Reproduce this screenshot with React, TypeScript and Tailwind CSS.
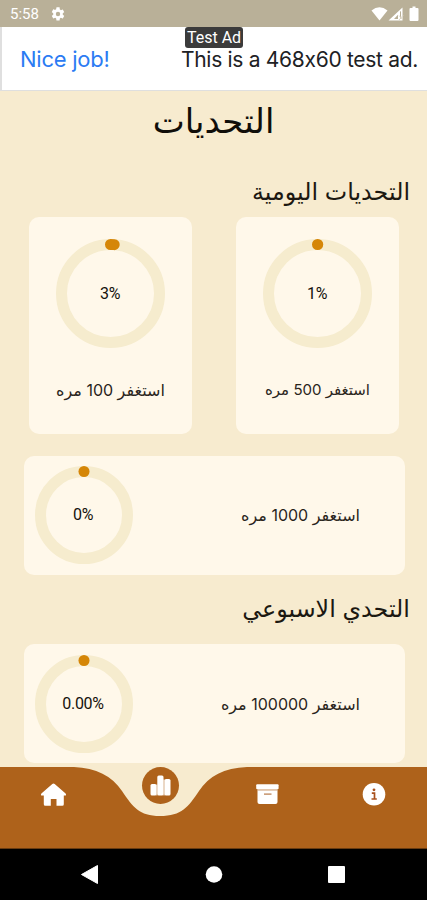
import type { ReactNode } from "react";

interface Challenge {
  label: string;
  percent: string;
  sweep: number;
}

const DAILY: Challenge[] = [
  { label: "استغفر 100 مره", percent: "3%", sweep: 3 },
  { label: "استغفر 500 مره", percent: "1%", sweep: 0.2 },
];

const DAILY_LONG: Challenge = { label: "استغفر 1000 مره", percent: "0%", sweep: 0 };
const WEEKLY: Challenge = { label: "استغفر 100000 مره", percent: "0.00%", sweep: 0 };

function Ring({ size, percent, sweep }: { size: number; percent: string; sweep: number }) {
  const r = size / 2 - 5.5;
  const c = size / 2;
  const angle = (sweep / 100) * Math.PI * 2;
  const x = c + r * Math.sin(angle * 0.4);
  const y = c - r * Math.cos(angle * 0.4);

  return (
    <div className="relative flex shrink-0 items-center justify-center">
      <svg width={size} height={size} className="block overflow-visible">
        <circle cx={c} cy={c} r={r} fill="none" stroke="#f6ecce" strokeWidth="11" />
        <path
          d={`M${c} ${c - r}A${r} ${r} 0 0 1 ${x + 0.01} ${y}`}
          fill="none"
          stroke="#d58607"
          strokeWidth="11"
          strokeLinecap="round"
        />
      </svg>
      <span className="absolute pr-px font-['Roboto',sans-serif] text-base leading-none tracking-[-0.3px] text-[#15120d]">
        {percent}
      </span>
    </div>
  );
}

function SquareCard({ item, className }: { item: Challenge; className: string }) {
  return (
    <div className="flex h-[217px] w-[163px] flex-col items-center rounded-[10px] bg-[#fff8ea] pt-[22px]">
      <Ring size={109} percent={item.percent} sweep={item.sweep} />
      <p dir="rtl" className={`mt-8 whitespace-nowrap leading-5 text-[#2a251c] ${className}`}>
        {item.label}
      </p>
    </div>
  );
}

function WideCard({ item, className }: { item: Challenge; className?: string }) {
  return (
    <div
      className={`ml-6 flex h-[119px] w-[381px] items-center justify-between rounded-[10px] bg-[#fff8ea] pr-[45px] pl-[10.5px] ${className ?? ""}`}
    >
      <Ring size={98} percent={item.percent} sweep={item.sweep} />
      <p dir="rtl" className="whitespace-nowrap text-base leading-5 text-[#2a251c]">
        {item.label}
      </p>
    </div>
  );
}

function SectionTitle({ children }: { children: ReactNode }) {
  return (
    <h2 dir="rtl" className="pr-[17px] text-[23.8px] leading-8 whitespace-nowrap text-[#1c1811]">
      {children}
    </h2>
  );
}

function StatusBar() {
  return (
    <header className="flex h-[27px] shrink-0 items-center bg-[#b9b098] pl-[10px] pr-[7px] text-white">
      <span className="pt-px font-['Roboto',sans-serif] text-[15px] leading-none">5:58</span>
      <svg viewBox="0 0 24 24" className="ml-[11px] size-4" fill="currentColor">
        <path d="M19.14 12.94c.04-.3.06-.61.06-.94s-.02-.64-.07-.94l2.03-1.58a.5.5 0 0 0 .12-.61l-1.92-3.32a.49.49 0 0 0-.59-.22l-2.39.96a7 7 0 0 0-1.62-.94l-.36-2.54A.48.48 0 0 0 13.92 2h-3.84a.48.48 0 0 0-.47.41l-.36 2.54a7 7 0 0 0-1.62.94l-2.39-.96a.49.49 0 0 0-.59.22L2.74 8.87a.49.49 0 0 0 .12.61l2.03 1.58a6 6 0 0 0 0 1.88l-2.03 1.58a.5.5 0 0 0-.12.61l1.92 3.32c.12.22.37.29.59.22l2.39-.96c.5.38 1.03.7 1.62.94l.36 2.54c.05.24.24.41.48.41h3.84c.24 0 .44-.17.47-.41l.36-2.54a7 7 0 0 0 1.62-.94l2.39.96c.22.08.47 0 .59-.22l1.92-3.32a.49.49 0 0 0-.12-.61zM12 15.3a3.3 3.3 0 1 1 0-6.6 3.3 3.3 0 0 1 0 6.6z" />
      </svg>
      <svg width="50" height="16" viewBox="0 0 50 16" className="ml-auto" fill="currentColor">
        <path d="M1.5 4.5Q9.5-2 17.5 4.5L9.5 14.5Z" />
        <path fillRule="evenodd" d="M18.5 14.5L32.5 1.5V14.5ZM24 13L28 8.8V13ZM30 5.8V13H31V5Z" />
        <path d="M29 9.5L33 14M33 9.5L29 14" stroke="#ded8c9" strokeWidth="1" />
        <path d="M42.5.5h3v1.5H47.5q1 0 1 1V14q0 1-1 1h-7q-1 0-1-1V3q0-1 1-1h2Z" />
      </svg>
    </header>
  );
}

function AdBanner() {
  return (
    <div className="relative flex h-16 shrink-0 items-center justify-between border-b border-l-2 border-[#dfdfdf] bg-white pt-px pr-[9px] pl-[18px] font-['Inter',sans-serif] text-[21px] leading-none whitespace-nowrap">
      <span className="text-[22px] tracking-[-0.25px] text-[#2b7bf3]">Nice job!</span>
      <span className="tracking-[-0.3px] text-[#202124]">This is a 468x60 test ad.</span>
      <span className="absolute top-0 left-[183px] flex h-[21px] w-[58px] items-center justify-center rounded-[3px] bg-[#3b3b3b] pt-px font-['Roboto',sans-serif] text-base leading-none text-white">
        Test Ad
      </span>
    </div>
  );
}

function TabBar() {
  return (
    <nav className="relative h-[82px] shrink-0">
      <svg width="427" height="82" viewBox="0 0 427 82" className="block">
        <path
          d="M0 0H74C96 1 112 9 122 24C133 40 139 49 160 49C182 49 188 40 199 24C209 9 224 1 247 0H427V82H0Z"
          fill="#ae621b"
        />
        <rect y="81" width="427" height="1" fill="#693b10" />
        <circle cx="160.5" cy="18.5" r="18.5" fill="#ae621b" />
        {/* stats */}
        <g fill="#fff">
          <rect x="150.5" y="17" width="6" height="11.5" rx="1.5" />
          <rect x="157.3" y="8.5" width="6.2" height="20" rx="1.5" />
          <rect x="164.5" y="12" width="6" height="16.5" rx="1.5" />
          <path d="M156 17.5h1.5v11H156zM163 12.5h2v16h-2z" opacity=".5" />
        </g>
        {/* home */}
        <path
          d="M52.3 16.9Q53.5 15.9 54.7 16.9L65.6 26.4Q66.8 28.4 65 28.6H63.8V37.2Q63.8 38.7 62.3 38.7H56.5V32H50.8V38.7H45.3Q43.8 38.7 43.8 37.2V28.6H42Q40.2 28.4 41.4 26.4Z"
          fill="#fff"
        />
        {/* archive */}
        <rect x="256.2" y="17.2" width="22.4" height="5" rx="1" fill="#fff" />
        <path d="M257.5 23.3H277.5V35Q277.5 37 275.5 37H259.5Q257.5 37 257.5 35Z" fill="#fff" />
        <rect x="257.5" y="22" width="20" height="1.5" fill="#e2c6ad" />
        <rect x="264" y="26.5" width="7.5" height="1.2" fill="#b87948" />
        {/* info */}
        <circle cx="374" cy="27.3" r="11.3" fill="#fff" />
        <circle cx="374" cy="22.8" r="1.4" fill="#a9501c" />
        <path d="M371.8 26.2H374.5V31.7M371.5 32H376.8" fill="none" stroke="#a9501c" strokeWidth="1.7" />
      </svg>
    </nav>
  );
}

function SystemBar() {
  return (
    <footer className="h-[51px] shrink-0 bg-black">
      <svg width="427" height="51" viewBox="0 0 427 51" className="block" fill="#fff">
        <path d="M81.5 25.5L97.5 16.5V34.5Z" stroke="#fff" strokeLinejoin="round" />
        <circle cx="214" cy="25.5" r="8.3" />
        <rect x="328" y="17" width="17" height="17" rx="1" />
      </svg>
    </footer>
  );
}

export default function App() {
  return (
    <div className="flex h-[900px] w-[427px] flex-col overflow-hidden bg-[#f7ebcf] font-['Inter','DejaVu_Sans',sans-serif]">
      <StatusBar />
      <AdBanner />
      <main className="h-[676px] shrink-0">
        <h1 dir="rtl" className="pt-2 text-center text-[34px] leading-[44px] text-[#100e0a]">
          التحديات
        </h1>
        <div className="pt-[33px]">
          <SectionTitle>التحديات اليومية</SectionTitle>
        </div>
        <div className="mt-[9px] flex justify-between pr-7 pl-[29px]">
          <SquareCard item={DAILY[0]} className="text-base" />
          <SquareCard item={DAILY[1]} className="text-[15px]" />
        </div>
        <div className="mt-[22px]">
          <WideCard item={DAILY_LONG} className="pb-px" />
        </div>
        <div className="pt-[18px] pb-[19px]">
          <SectionTitle>التحدي الاسبوعي</SectionTitle>
        </div>
        <WideCard item={WEEKLY} />
      </main>
      <TabBar />
      <SystemBar />
    </div>
  );
}
